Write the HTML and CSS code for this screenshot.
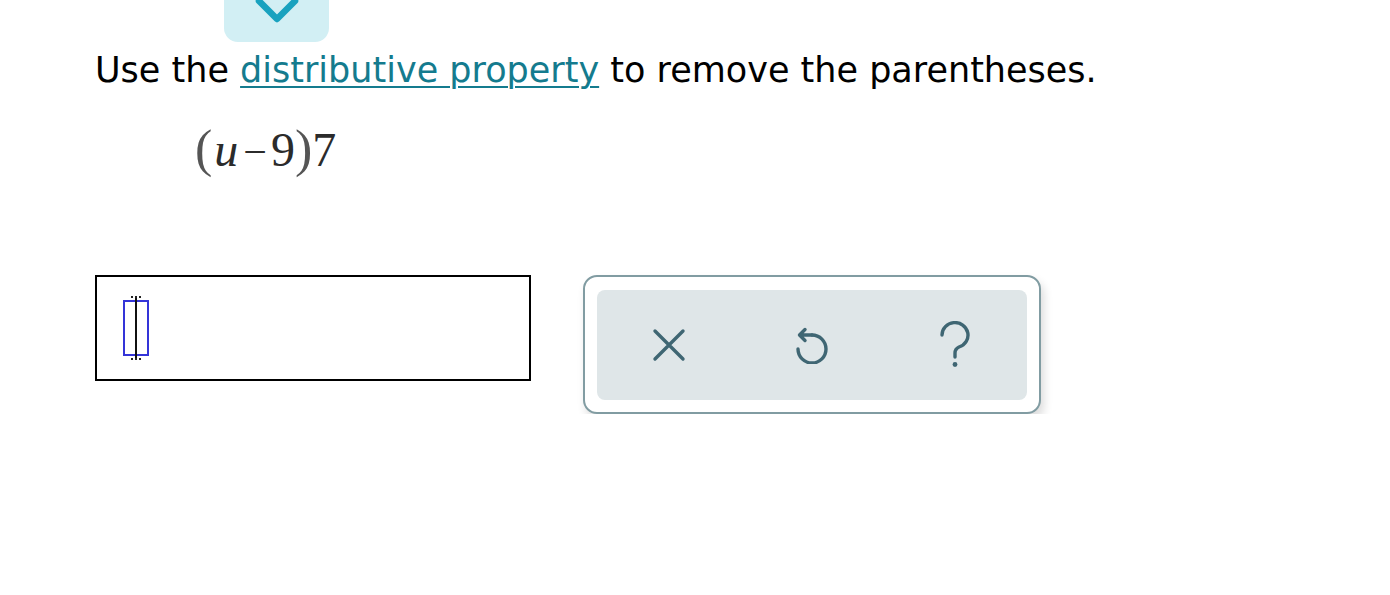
FILE: index.html
```html
<!DOCTYPE html>
<html lang="en">
<head>
<meta charset="utf-8">
<title>Distributive property</title>
<link rel="stylesheet" href="styles.css">
</head>
<body>
<div class="page">
  <div class="top-tab">
    <svg class="chevron" width="105" height="42" viewBox="0 0 105 42" aria-hidden="true">
      <polyline points="35,1 53,19 71,1" fill="none" stroke="#19a2bf" stroke-width="6.5" stroke-linecap="round" stroke-linejoin="round"/>
    </svg>
  </div>
  <p class="prompt">Use the <a class="link" href="#">distributive property</a> to remove the parentheses.</p>
  <div class="math"><span class="paren">(</span><i class="var">u</i><span class="minus">−</span>9<span class="paren">)</span>7</div>
  <div class="answer-row">
    <div class="answer-box">
      <span class="cursor"><span class="caret"></span></span>
    </div>
    <div class="toolbar">
      <div class="toolbar-inner">
        <button class="tool" type="button" aria-label="Clear">
          <svg width="34" height="34" viewBox="0 0 34 34"><path d="M3 3 L31 31 M31 3 L3 31" fill="none" stroke="#3f6673" stroke-width="3.4" stroke-linecap="round"/></svg>
        </button>
        <button class="tool" type="button" aria-label="Undo">
          <svg width="34" height="38" viewBox="0 0 34 38"><path d="M17 9 A14 14 0 1 1 3 23" fill="none" stroke="#3f6673" stroke-width="3.4" stroke-linecap="round"/><path d="M17 9 H5 M10 3.5 L4.5 9 L10 14.5" fill="none" stroke="#3f6673" stroke-width="3.4" stroke-linecap="round" stroke-linejoin="round"/></svg>
        </button>
        <button class="tool" type="button" aria-label="Help">
          <svg width="34" height="48" viewBox="0 0 34 48"><path d="M4 14 A13 12.5 0 1 1 21 26 Q17 28 17 32 V36" fill="none" stroke="#3f6673" stroke-width="3.4" stroke-linecap="round"/><circle cx="17" cy="43.5" r="2.4" fill="#3f6673"/></svg>
        </button>
      </div>
    </div>
  </div>
</div>
</body>
</html>
```

FILE: styles.css
```css
* { box-sizing: border-box; }
html, body { margin: 0; padding: 0; background: #fff; }
.page {
  padding-left: 95px;
  font-family: "DejaVu Sans", Verdana, sans-serif;
  color: #000;
}
.top-tab {
  margin-left: 129px;
  width: 105px;
  height: 42px;
  background: #d2eff4;
  border-radius: 0 0 14px 14px;
  display: flex;
}
.prompt {
  margin: 5px 0 0;
  font-size: 35px;
  line-height: 46px;
}
.link {
  color: #147b8e;
  text-decoration: underline;
  text-underline-offset: 4px;
  text-decoration-thickness: 2px;
}
.math {
  margin: 26px 0 0 100px;
  font-family: "Liberation Serif", "Times New Roman", serif;
  font-size: 48px;
  line-height: 60px;
  color: #2b2b2b;
  display: flex;
  align-items: baseline;
}
.math .paren { font-size: 52px; color: #555; }
.math .var { margin: 0 3px 0 2px; }
.math .minus { margin: 0 4px 0 2px; font-size: 42px; }
.answer-row {
  margin-top: 93px;
  display: flex;
  align-items: flex-start;
  gap: 52px;
}
.answer-box {
  width: 436px;
  height: 106px;
  border: 2px solid #000;
  display: flex;
  align-items: center;
  padding-left: 26px;
}
.cursor {
  width: 26px;
  height: 56px;
  border: 2px solid #3434d8;
  display: flex;
  justify-content: center;
}
.caret {
  width: 2px;
  margin-top: -6px;
  margin-bottom: -6px;
  background: #111;
  position: relative;
}
.caret::before, .caret::after {
  content: "";
  position: absolute;
  left: -4px;
  width: 10px;
  height: 0;
  border-top: 2px dotted #222;
}
.caret::before { top: 0; }
.caret::after { bottom: 0; }
.toolbar {
  width: 458px;
  height: 139px;
  border: 2px solid #819ca2;
  border-radius: 14px;
  padding: 13px 12px;
  background: #fff;
  box-shadow: 3px 6px 10px rgba(0, 0, 0, 0.14);
}
.toolbar-inner {
  height: 110px;
  background: #dfe6e8;
  border-radius: 8px;
  display: grid;
  grid-template-columns: repeat(3, 1fr);
}
.tool {
  border: 0;
  background: transparent;
  padding: 0;
  display: flex;
  align-items: center;
  justify-content: center;
  cursor: pointer;
}
```
